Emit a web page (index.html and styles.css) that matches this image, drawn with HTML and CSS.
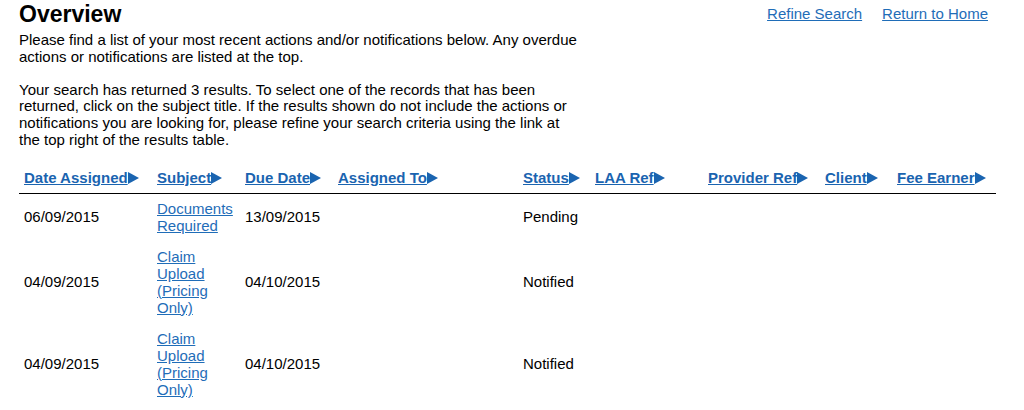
FILE: index.html
```html
<!DOCTYPE html>
<html>
<head>
  <meta charset="utf-8">
  <title>Overview</title>
  <link rel="stylesheet" href="styles.css">
</head>
<body>
  <div class="page">
    <div class="top">
      <div class="intro">
        <h1 class="title">Overview</h1>
        <p>Please find a list of your most recent actions and/or notifications below. Any overdue actions or notifications are listed at the top.</p>
        <p>Your search has returned 3 results. To select one of the records that has been returned, click on the subject title. If the results shown do not include the actions or notifications you are looking for, please refine your search criteria using the link at the top right of the results table.</p>
      </div>
      <div class="links">
        <a href="#">Refine Search</a>
        <a href="#">Return to Home</a>
      </div>
    </div>
    <table class="results">
      <colgroup>
        <col style="width: 133px">
        <col style="width: 88px">
        <col style="width: 93px">
        <col style="width: 185px">
        <col style="width: 72px">
        <col style="width: 113px">
        <col style="width: 117px">
        <col style="width: 72px">
        <col style="width: 104px">
      </colgroup>
      <thead>
        <tr>
          <th><a href="#">Date Assigned</a><span class="sort"></span></th>
          <th><a href="#">Subject</a><span class="sort"></span></th>
          <th><a href="#">Due Date</a><span class="sort"></span></th>
          <th><a href="#">Assigned To</a><span class="sort"></span></th>
          <th><a href="#">Status</a><span class="sort"></span></th>
          <th><a href="#">LAA Ref</a><span class="sort"></span></th>
          <th><a href="#">Provider Ref</a><span class="sort"></span></th>
          <th><a href="#">Client</a><span class="sort"></span></th>
          <th><a href="#">Fee Earner</a><span class="sort"></span></th>
        </tr>
      </thead>
      <tbody>
        <tr>
          <td>06/09/2015</td>
          <td><a href="#">Documents Required</a></td>
          <td>13/09/2015</td>
          <td></td>
          <td>Pending</td>
          <td></td><td></td><td></td><td></td>
        </tr>
        <tr>
          <td>04/09/2015</td>
          <td><a href="#">Claim Upload (Pricing Only)</a></td>
          <td>04/10/2015</td>
          <td></td>
          <td>Notified</td>
          <td></td><td></td><td></td><td></td>
        </tr>
        <tr>
          <td>04/09/2015</td>
          <td><a href="#">Claim Upload (Pricing Only)</a></td>
          <td>04/10/2015</td>
          <td></td>
          <td>Notified</td>
          <td></td><td></td><td></td><td></td>
        </tr>
      </tbody>
    </table>
  </div>
</body>
</html>
```

FILE: styles.css
```css
*, *:before, *:after {
  box-sizing: border-box;
}
body {
  margin: 0;
  padding: 0;
  font-family: "Liberation Sans", Arial, sans-serif;
  font-size: 15px;
  color: #000;
  background: #fff;
}
a {
  color: #1f6db8;
}

.page {
  padding: 2px 28px 0 19px;
}
.top {
  display: flex;
  justify-content: space-between;
  align-items: flex-start;
}
.intro {
  width: 562px;
}
.title {
  font-size: 23px;
  font-weight: bold;
  margin: 0;
  line-height: 25px;
}
.intro p {
  margin: 5px 0 16px;
  line-height: 16.8px;
}
.links {
  display: flex;
  gap: 20px;
  padding-top: 3px;
  padding-right: 8px;
}

.results {
  border-collapse: collapse;
  table-layout: fixed;
  width: 977px;
  margin-top: -2px;
}
.results th {
  text-align: left;
  font-weight: bold;
  padding: 6px 0 7px 5px;
  border-bottom: 1px solid #000;
  white-space: nowrap;
}
.results th a {
  color: #1a64b0;
}
.sort {
  display: inline-block;
  width: 0;
  height: 0;
  border-top: 6px solid transparent;
  border-bottom: 6px solid transparent;
  border-left: 11px solid #1a64b0;
  vertical-align: -1px;
}
.results td {
  padding: 7px 0 7px 5px;
  line-height: 17px;
  vertical-align: middle;
}
.results tbody tr:first-child td {
  padding-top: 6px;
}
```
